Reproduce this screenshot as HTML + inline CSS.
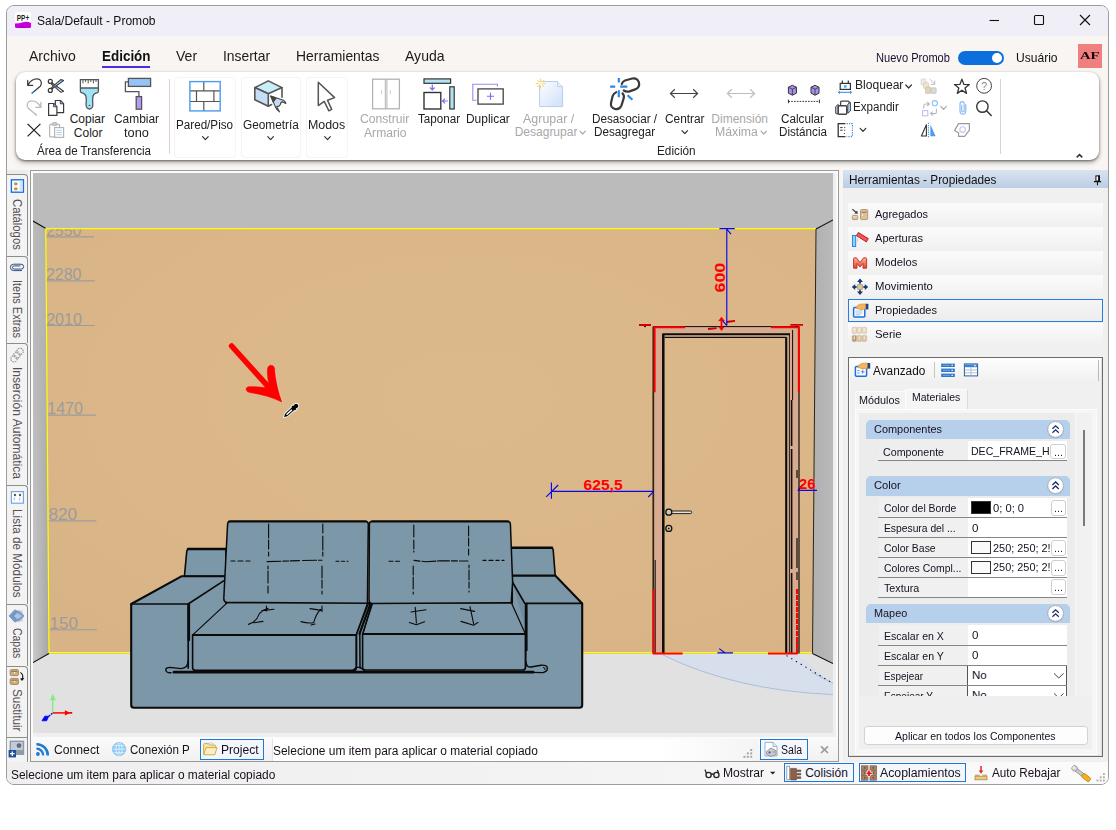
<!DOCTYPE html>
<html><head><meta charset="utf-8"><title>Sala/Default - Promob</title>
<style>
html,body{margin:0;padding:0;background:#fff;}
body{width:1116px;height:830px;position:relative;overflow:hidden;font-family:"Liberation Sans",sans-serif;}
.t{position:absolute;white-space:nowrap;line-height:1;transform-origin:0 0;}
.b{position:absolute;box-sizing:border-box;}
#win{position:absolute;left:6px;top:5px;width:1103px;height:780px;box-sizing:border-box;border:1px solid #9c9c9c;border-radius:8px;background:#f8f5f2;overflow:hidden;}
</style></head>
<body>
<div id="win"></div>
<div class="b" style="left:7px;top:6px;width:1101px;height:30px;background:#f0eef7;border-radius:7px 7px 0 0;"></div>
<svg class="b" style="left:15px;top:12px;" width="17" height="17" viewBox="0 0 17 17"><rect x="0" y="0" width="16" height="16" rx="2" fill="#fff"/><text x="1.8" y="8.6" font-size="9.5" font-weight="bold" font-family="Liberation Sans" fill="#222" textLength="12.4" lengthAdjust="spacingAndGlyphs">PP+</text><path d="M0 11.5 Q4 11.5 7 10.5 Q12 9 16 11 V14.5 Q16 16 14.5 16 H1.5 Q0 16 0 14.5Z" fill="#c800e0"/><path d="M4 16 L8 11.5 L10 16Z" fill="#9a00c0" opacity=".6"/></svg>
<span class="t" style="left:36.5px;top:15px;font-size:12.5px;color:#111;transform:scaleX(0.964);">Sala/Default - Promob</span>
<svg class="b" style="left:985px;top:10px;" width="110" height="20" viewBox="0 0 110 20"><path d="M4.5 10.5H14" stroke="#111" stroke-width="1.1" fill="none"/><rect x="49.5" y="5.5" width="9" height="9" rx="1" stroke="#111" stroke-width="1.1" fill="none"/><path d="M95 5L105 15M105 5L95 15" stroke="#111" stroke-width="1.1" fill="none"/></svg>
<span class="t" style="left:28.8px;top:48px;font-size:15px;color:#1f1a17;transform:scaleX(0.935);">Archivo</span>
<span class="t" style="left:102.0px;top:48px;font-size:15px;color:#111;font-weight:bold;transform:scaleX(0.896);">Edición</span>
<div class="b" style="left:102px;top:66px;width:48px;height:2px;background:#4a2fe0;"></div>
<span class="t" style="left:176.0px;top:48px;font-size:15px;color:#1f1a17;transform:scaleX(0.939);">Ver</span>
<span class="t" style="left:222.7px;top:48px;font-size:15px;color:#1f1a17;transform:scaleX(0.925);">Insertar</span>
<span class="t" style="left:295.7px;top:48px;font-size:15px;color:#1f1a17;transform:scaleX(0.926);">Herramientas</span>
<span class="t" style="left:404.8px;top:48px;font-size:15px;color:#1f1a17;transform:scaleX(0.936);">Ayuda</span>
<span class="t" style="left:875.9px;top:52px;font-size:12.5px;color:#1a0f30;transform:scaleX(0.887);">Nuevo Promob</span>
<div class="b" style="left:957.5px;top:50.5px;width:46px;height:14.5px;background:#0c6fdc;border-radius:8px;"></div>
<div class="b" style="left:991.5px;top:52.5px;width:10.5px;height:10.5px;background:#fff;border-radius:6px;"></div>
<span class="t" style="left:1016.1px;top:51px;font-size:13px;color:#111;transform:scaleX(0.928);">Usuário</span>
<div class="b" style="left:1078px;top:44px;width:24px;height:23.5px;background:#f08080;"></div>
<span class="t" style="left:1080.2px;top:50px;font-size:11px;color:#140808;font-weight:bold;font-family:'Liberation Serif',serif;transform:scaleX(1.336);">AF</span>
<div class="b" style="left:16px;top:72px;width:1082.6px;height:87.6px;background:#fff;border-radius:9px;box-shadow:0 1px 2.5px rgba(0,0,0,.5),0 3px 5px rgba(0,0,0,.22);"></div>
<div class="b" style="left:173.5px;top:76.5px;width:62px;height:81px;border:1px solid #f8f2f2;border-radius:4px;"></div>
<div class="b" style="left:240.5px;top:76.5px;width:60px;height:81px;border:1px solid #f8f2f2;border-radius:4px;"></div>
<div class="b" style="left:305.5px;top:76.5px;width:42px;height:81px;border:1px solid #f8f2f2;border-radius:4px;"></div>
<div class="b" style="left:169px;top:79px;width:1px;height:75px;background:#ddd2cf;"></div>
<div class="b" style="left:1000px;top:79px;width:1px;height:75px;background:#ddd2cf;"></div>
<span class="t" style="left:69.7px;top:113px;font-size:12px;color:#222;">Copiar</span>
<span class="t" style="left:73.8px;top:127px;font-size:12px;color:#222;">Color</span>
<span class="t" style="left:113.5px;top:113px;font-size:12px;color:#222;transform:scaleX(0.994);">Cambiar</span>
<span class="t" style="left:124.2px;top:127px;font-size:12px;color:#222;transform:scaleX(1.065);">tono</span>
<span class="t" style="left:36.5px;top:145px;font-size:12px;color:#222;transform:scaleX(0.966);">Área de Transferencia</span>
<span class="t" style="left:176.1px;top:119px;font-size:12px;color:#222;transform:scaleX(0.972);">Pared/Piso</span>
<span class="t" style="left:242.5px;top:119px;font-size:12px;color:#222;transform:scaleX(0.986);">Geometría</span>
<span class="t" style="left:308.4px;top:119px;font-size:12px;color:#222;transform:scaleX(1.032);">Modos</span>
<span class="t" style="left:359.8px;top:113px;font-size:12px;color:#a8a8a8;transform:scaleX(1.012);">Construir</span>
<span class="t" style="left:363.5px;top:127px;font-size:12px;color:#a8a8a8;transform:scaleX(1.011);">Armario</span>
<span class="t" style="left:418.0px;top:113px;font-size:12px;color:#222;transform:scaleX(0.973);">Taponar</span>
<span class="t" style="left:466.4px;top:113px;font-size:12px;color:#222;transform:scaleX(0.995);">Duplicar</span>
<span class="t" style="left:523.3px;top:113px;font-size:12px;color:#a8a8a8;transform:scaleX(1.039);">Agrupar /</span>
<span class="t" style="left:514.7px;top:126px;font-size:12px;color:#a8a8a8;">Desagrupar</span>
<span class="t" style="left:591.5px;top:113px;font-size:12px;color:#222;transform:scaleX(0.976);">Desasociar /</span>
<span class="t" style="left:594.0px;top:126px;font-size:12px;color:#222;transform:scaleX(0.974);">Desagregar</span>
<span class="t" style="left:664.5px;top:113px;font-size:12px;color:#222;transform:scaleX(0.989);">Centrar</span>
<span class="t" style="left:711.3px;top:113px;font-size:12px;color:#a8a8a8;">Dimensión</span>
<span class="t" style="left:715.2px;top:126px;font-size:12px;color:#a8a8a8;transform:scaleX(1.021);">Máxima</span>
<span class="t" style="left:781.3px;top:113px;font-size:12px;color:#222;transform:scaleX(0.974);">Calcular</span>
<span class="t" style="left:779.2px;top:126px;font-size:12px;color:#222;transform:scaleX(0.972);">Distáncia</span>
<span class="t" style="left:657.0px;top:145px;font-size:12px;color:#222;transform:scaleX(0.980);">Edición</span>
<span class="t" style="left:854.7px;top:79px;font-size:12px;color:#222;transform:scaleX(1.007);">Bloquear</span>
<span class="t" style="left:853.3px;top:101px;font-size:12px;color:#222;transform:scaleX(0.967);">Expandir</span>
<svg class="b" style="left:0px;top:0px;" width="1116" height="170" viewBox="0 0 1116 170"><path d="M202.6 136.6l2.8 3l2.8 -3" stroke="#333" stroke-width="1.2" fill="none" stroke-linecap="round" stroke-linejoin="round"/><path d="M267.8 136.6l2.8 3l2.8 -3" stroke="#333" stroke-width="1.2" fill="none" stroke-linecap="round" stroke-linejoin="round"/><path d="M324.7 136.6l2.8 3l2.8 -3" stroke="#333" stroke-width="1.2" fill="none" stroke-linecap="round" stroke-linejoin="round"/><path d="M580 131.2l2.7 2.8l2.7 -2.8" stroke="#a8a8a8" stroke-width="1.2" fill="none" stroke-linecap="round" stroke-linejoin="round"/><path d="M682 130.6l2.8 3l2.8 -3" stroke="#333" stroke-width="1.2" fill="none" stroke-linecap="round" stroke-linejoin="round"/><path d="M761 131.2l2.7 2.8l2.7 -2.8" stroke="#a8a8a8" stroke-width="1.2" fill="none" stroke-linecap="round" stroke-linejoin="round"/><path d="M905.8 85l2.8 3l2.8 -3" stroke="#333" stroke-width="1.2" fill="none" stroke-linecap="round" stroke-linejoin="round"/><path d="M860.2 128.3l2.8 3l2.8 -3" stroke="#333" stroke-width="1.2" fill="none" stroke-linecap="round" stroke-linejoin="round"/><path d="M940.8 106.3l2.8 3l2.8 -3" stroke="#a8a8a8" stroke-width="1.2" fill="none" stroke-linecap="round" stroke-linejoin="round"/><path d="M1076.7 157.4l2.8-2.8l2.8 2.8" stroke="#333" stroke-width="1.5" fill="none"/><path d="M27.7 80.4V85.3H32.8M27.9 85.1C30 81 33.5 78.7 37.3 78.8C41 79 42.6 83 40.3 86.2L32.2 93" stroke="#3a3a3a" stroke-width="1.25" fill="none" stroke-linecap="round" stroke-linejoin="round"/><path d="M33.4 92L32.2 93" stroke="#3b8eea" stroke-width="1.4" stroke-linecap="round"/><path d="M40.9 102.4V107.3H35.8M40.7 107.1C38.6 103 35.1 100.7 31.3 100.8C27.6 101 26 105 28.3 108.2L36.4 115" stroke="#b9b9b9" stroke-width="1.25" fill="none" stroke-linecap="round" stroke-linejoin="round"/><path d="M35.2 114L36.4 115" stroke="#9cc6f5" stroke-width="1.4" stroke-linecap="round"/><circle cx="50.3" cy="81.4" r="2" fill="#fff" stroke="#3a3a3a" stroke-width="1.2"/><circle cx="50.3" cy="90.4" r="2" fill="#fff" stroke="#3a3a3a" stroke-width="1.2"/><path d="M51.8 82.8L63.6 91.3L61 92.3L51.3 84Z" fill="#fff" stroke="#3a3a3a" stroke-width="1.1" stroke-linejoin="round"/><path d="M51.8 89L63.6 80.5L61 79.5L51.3 87.8Z" fill="#fff" stroke="#3a3a3a" stroke-width="1.1" stroke-linejoin="round"/><path d="M60.2 81L62.4 79.9M55.4 87L57.6 88.4" stroke="#3b8eea" stroke-width="1.3"/><path d="M55.3 100.5H60.5L63.6 103.6V112.7H55.3Z" fill="#fff" stroke="#3a3a3a" stroke-width="1.2" stroke-linejoin="round"/><path d="M60.3 100.8V103.8H63.4" fill="#b08ae8" stroke="#3a3a3a" stroke-width=".9"/><path d="M48.6 103.5H53.8L56.9 106.6V115.4H48.6Z" fill="#fff" stroke="#3a3a3a" stroke-width="1.2" stroke-linejoin="round"/><path d="M53.6 103.8V106.8H56.7" fill="#b08ae8" stroke="#3a3a3a" stroke-width=".9"/><path d="M27.6 123.9L40.4 136.4M40.4 123.9L27.6 136.4" stroke="#222" stroke-width="1.3" fill="none"/><rect x="49.6" y="124.3" width="10" height="12.6" rx="1" fill="#fff" stroke="#b5b5b5" stroke-width="1.2"/><rect x="52.3" y="122.6" width="4.6" height="3" rx=".8" fill="#c9c4dc" stroke="#b5b5b5" stroke-width=".9"/><rect x="54.6" y="127.6" width="9" height="9.8" fill="#fff" stroke="#b5b5b5" stroke-width="1.2"/><path d="M56.4 130.3H61.8M56.4 132.5H61.8M56.4 134.7H61.8" stroke="#a9d0f7" stroke-width="1"/><path d="M80.4 88V79.6H98.4V88" fill="#fff" stroke="#555" stroke-width="1.3"/><path d="M83 80V83.4M85.6 80V82M88.2 80V83.4M90.8 80V82M93.4 80V83.4M96 80V82" stroke="#555" stroke-width="1"/><path d="M80.4 88H98.4V91.2Q98.4 92.6 96.8 92.9Q93.6 93.6 92.9 96.5Q92.4 99.5 92.8 103.5Q93.2 108.8 89.5 109Q85.7 108.8 86.1 103.5Q86.5 99.5 86 96.5Q85.3 93.6 82 92.9Q80.4 92.6 80.4 91.2Z" fill="#9fe3f8" stroke="#555" stroke-width="1.3" stroke-linejoin="round"/><path d="M88.6 105.4H90.4" stroke="#555" stroke-width="1"/><path d="M128.3 81.8H125.4V91.6H138.9V96.6" fill="none" stroke="#555" stroke-width="1.3"/><rect x="128.4" y="78.4" width="22.2" height="8" fill="#94c4f5" stroke="#555" stroke-width="1.3"/><rect x="136.2" y="96.6" width="5.4" height="12.6" fill="#b79af5" stroke="#555" stroke-width="1.3"/><path d="M190 90.8H220M190 101.5H220M203.8 81.5V90.8M196.5 90.8V101.5M213.9 90.8V101.5M203.8 101.5V111" stroke="#555" stroke-width="1.2" fill="none"/><rect x="189.9" y="81.6" width="30.3" height="29.3" fill="none" stroke="#4b9cee" stroke-width="1.4"/><path d="M282 87.5V99.7L268.3 106.2V93.6Z" fill="#fff"/><path d="M268.3 80.9L282 87.6L268.3 93.7L254.8 87.6Z" fill="#c9edfb" stroke="#555" stroke-width="1.6" stroke-linejoin="round"/><path d="M254.8 87.6L268.3 93.7V106.2L254.8 99.7Z" fill="#c6ddf6" stroke="#555" stroke-width="1.6" stroke-linejoin="round"/><path d="M282 87.6V97.2M268.3 106.2L271.6 104.5" fill="none" stroke="#555" stroke-width="1.6" stroke-linecap="round"/><path d="M270.7 96L283.4 100.2Q285.4 101.4 285.9 103.4L282.6 101.9Q280.6 102 280.4 104.4Q279.4 106.6 276.6 106.6L279.6 111.9Q277 110 275.6 107.4Z" fill="#c4daf5" stroke="#444" stroke-width="1.1" stroke-linejoin="round"/><path d="M270.7 96L276.4 98L273.2 102.4Z" fill="#444" stroke="#444" stroke-width=".8" stroke-linejoin="round"/><path d="M318.3 82.2V105.6L324.2 101.4L328.9 110.8L331.7 109.4L327.5 100.3L334.6 97.6Z" fill="#fff" stroke="#555" stroke-width="1.5" stroke-linejoin="round"/><rect x="372.6" y="79.2" width="26.8" height="29.6" fill="#fff" stroke="#b3b3b3" stroke-width="1.3"/><path d="M385.3 79.2V108.8M386.9 79.2V108.8" stroke="#b3b3b3" stroke-width="1"/><path d="M381.6 90.3V94.2M390.4 90.3V94.2" stroke="#d4c8f5" stroke-width="1.2"/><rect x="424" y="78.9" width="26.6" height="4.4" fill="#b4e3f5" stroke="#333" stroke-width="1.2"/><rect x="449.8" y="86.8" width="4.4" height="22.2" fill="#b4e3f5" stroke="#333" stroke-width="1.2"/><rect x="424" y="92.5" width="16.8" height="16.5" fill="#fff" stroke="#333" stroke-width="1.4"/><path d="M432.3 84.6V89.6M430 87.5L432.3 89.8L434.6 87.5" stroke="#8a63ee" stroke-width="1.2" fill="none"/><path d="M447.8 101H442.8M444.9 98.7L442.6 101L444.9 103.3" stroke="#8a63ee" stroke-width="1.2" fill="none"/><path d="M497.4 86.5V84.2H472.8V100.2H476.5" fill="none" stroke="#9f89f0" stroke-width="1.1"/><rect x="478" y="88.9" width="25.2" height="15.2" fill="#fff" stroke="#444" stroke-width="1.3"/><path d="M490.5 92.8V99.8M487 96.3H494" stroke="#8a63ee" stroke-width="1.1"/><defs><linearGradient id="pg" x1="0" y1="0" x2="1" y2="1"><stop offset="0" stop-color="#fdfeff"/><stop offset="1" stop-color="#cfe0f8"/></linearGradient></defs><path d="M539.6 81.5H557.5L562.6 86.6V106.6H539.6Z" fill="url(#pg)" stroke="#b9cdf0" stroke-width="1"/><path d="M557.5 81.5V86.6H562.6" fill="#e8f0fc" stroke="#b9cdf0" stroke-width=".9"/><path d="M540.6 78.6V88.6M535.6 83.6H545.6M537.2 80.2L544 87M544 80.2L537.2 87" stroke="#f3d35a" stroke-width="1"/><circle cx="540.6" cy="83.6" r="2" fill="#fff6c8"/><g fill="none" stroke="#3a3a3a" stroke-width="2.2" stroke-linecap="round" stroke-linejoin="round"><path d="M621.8 84.1Q622.4 81.4 625 80.5L632.2 78.5Q637.2 77.6 638.9 82.3Q640.2 87.6 635.2 89.4L629.5 91.4Q626.4 92.3 623.8 90.5"/><path d="M616.2 92.2Q613.4 93.4 612.5 96.4L611 103Q610.2 107.6 614.8 108.9Q619.6 109.9 621.4 105.6L623.6 98.6Q624.6 95.6 622.5 93.3"/></g><path d="M618.8 78.1V82.6M610.1 86.6H615.2M620.2 86.6H627.3M618.8 90.2V97.3M627.6 95.2L632.4 99.8" stroke="#2b87ee" stroke-width="2.2" fill="none"/><path d="M670.6 93.5H697.4M674.8 89.3L670.4 93.5L674.8 97.7M693.2 89.3L697.6 93.5L693.2 97.7" stroke="#444" stroke-width="1.2" fill="none"/><path d="M727.6 93.5H754.4M731.8 89.3L727.4 93.5L731.8 97.7M750.2 89.3L754.6 93.5L750.2 97.7" stroke="#bdbdbd" stroke-width="1.2" fill="none"/><path d="M792.4 85.3L796.4 87.2V93.2L792.4 95.2L788.4 93.2V87.2Z" fill="#a88ff0" stroke="#333" stroke-width="1" stroke-linejoin="round"/><path d="M788.4 87.2L792.4 89.2L796.4 87.2M792.4 89.2V95.2" stroke="#333" stroke-width=".8" fill="none"/><path d="M815 85.3L819 87.2V93.2L815 95.2L811 93.2V87.2Z" fill="#a88ff0" stroke="#333" stroke-width="1" stroke-linejoin="round"/><path d="M811 87.2L815 89.2L819 87.2M815 89.2V95.2" stroke="#333" stroke-width=".8" fill="none"/><path d="M788.4 101.4H819.4" stroke="#333" stroke-width="1" stroke-dasharray="1.6 1.2"/><path d="M788.4 99.6V103.2M819.4 99.6V103.2" stroke="#333" stroke-width="1"/><rect x="840.2" y="83.4" width="10.2" height="6" fill="#fff" stroke="#333" stroke-width="1.2"/><path d="M842.3 83.4V80.4M848.3 83.4V80.4" stroke="#333" stroke-width="1.2"/><rect x="844" y="85" width="2.6" height="2.8" fill="#39c6f2"/><path d="M838.4 92.3H851.6M840 90.9L838.4 92.3L840 93.7M850 90.9L851.6 92.3L850 93.7" stroke="#2f86ee" stroke-width="1" fill="none"/><rect x="840.6" y="101.2" width="8.6" height="8.6" rx="1" fill="#fff" stroke="#444" stroke-width="1.3"/><path d="M835.7 106.6L838.2 104.4V114.2L835.7 113.4Z" fill="#bcd6f3" stroke="#444" stroke-width="1" stroke-linejoin="round"/><path d="M847.8 104.2L850.4 102.4V111L847.8 113.2Z" fill="#bcd6f3" stroke="#444" stroke-width="1" stroke-linejoin="round"/><rect x="838.3" y="105.8" width="8.4" height="8.4" rx="1" fill="#fff" stroke="#444" stroke-width="1.4"/><path d="M845.4 123.6H838.2V136.6H845.4" fill="#fff" stroke="#333" stroke-width="1.3"/><path d="M840.2 127.6H842.6M840.2 130.2H842.6M844.2 127.6H845.2M844.2 130.2H845.2M844.4 133V134" stroke="#333" stroke-width="1"/><path d="M846.6 123.6H852.4V136.6H846.6" fill="none" stroke="#2f86ee" stroke-width="1.2" stroke-dasharray="1.2 1.2"/><rect x="921" y="79" width="5" height="6" rx="1" fill="#efe9e0" stroke="#d9d3c8" stroke-width=".7"/><rect x="923.5" y="82.5" width="5" height="6" rx="1" fill="#ece3d3" stroke="#d5cbb8" stroke-width=".7"/><rect x="925.5" y="87" width="5.4" height="6.4" rx="1" fill="#e3d3b8" stroke="#cbbd9f" stroke-width=".7"/><rect x="931" y="87.8" width="5.2" height="5.6" rx="1" fill="#d9d9d9" stroke="#c2c2c2" stroke-width=".7"/><path d="M929.6 79L934.8 84.2M934.8 80.6V84.4H931" stroke="#bdbdbd" stroke-width="1" fill="none"/><circle cx="934.8" cy="103.2" r="2.6" fill="none" stroke="#8cc0f3" stroke-width="1.1"/><rect x="922.6" y="110.6" width="5.2" height="5.2" fill="none" stroke="#c9bbf3" stroke-width="1.1"/><path d="M923.8 108.6V105.6Q923.8 104 925.6 104H929M927.2 102L929.4 104L927.2 106" stroke="#b9b9b9" stroke-width="1.1" fill="none"/><path d="M936.4 108.8V112.2Q936.4 113.6 934.8 113.6H931M932.8 111.6L930.6 113.6L932.8 115.6" stroke="#b9b9b9" stroke-width="1.1" fill="none"/><path d="M921.4 136L926.4 124.8V136Z" fill="#fff" stroke="#333" stroke-width="1.1" stroke-linejoin="round"/><path d="M930.4 124.6V136.2H935.6Z" fill="#4b9cee"/><path d="M928.4 122.8V137.8" stroke="#2f86ee" stroke-width="1" stroke-dasharray="1.2 1"/><polygon points="961.9,79.1 963.8,84.3 969.4,84.6 965.0,88.0 966.5,93.4 961.9,90.3 957.3,93.4 958.8,88.0 954.4,84.6 960.0,84.3" fill="#fff" stroke="#333" stroke-width="1.3" stroke-linejoin="round"/><circle cx="984.1" cy="85.8" r="7.4" fill="#fff" stroke="#444" stroke-width="1"/><text x="984.1" y="89.6" font-size="10.5" text-anchor="middle" fill="#888" font-family="Liberation Sans">?</text><path d="M965.8 104.6V110.8Q965.8 114.2 962.9 114.2Q960 114.2 960 110.8V104Q960 101.6 962.2 101.6Q964.2 101.6 964.2 104V110.4Q964.2 111.8 962.9 111.8Q961.7 111.8 961.7 110.4V105" fill="none" stroke="#8bbcf2" stroke-width="1.2" stroke-linecap="round"/><circle cx="982.4" cy="106.6" r="5.7" fill="none" stroke="#333" stroke-width="1.4"/><path d="M986.5 110.8L991.2 115.5" stroke="#333" stroke-width="1.5" stroke-linecap="round"/><path d="M958.6 123.6H969.4V130.2L964.6 136.4H958.6V132.8L954.6 130.4Z" fill="#fff" stroke="#9a9a9a" stroke-width="1.2" stroke-linejoin="round"/><circle cx="962.6" cy="129.6" r="2.8" fill="none" stroke="#cdbff5" stroke-width="1.1"/></svg>
<div class="b" style="left:7px;top:170px;width:24px;height:593px;background:#ececec;"></div>
<div class="b" style="left:27.5px;top:170px;width:3px;height:593px;background:#f4f4f4;"></div>
<div class="b" style="left:7px;top:174px;width:21px;height:82px;background:#f3f3f3;border-top:1px solid #8c8c8c;border-right:1px solid #8c8c8c;border-radius:0 4px 0 0;"></div>
<span class="t" style="left:23.4px;top:198.6px;font-size:12px;color:#565054;transform:rotate(90deg) scaleX(0.940);">Catálogos</span>
<div class="b" style="left:7px;top:256px;width:21px;height:87px;background:#f3f3f3;border-top:1px solid #8c8c8c;border-right:1px solid #8c8c8c;border-radius:0 4px 0 0;"></div>
<span class="t" style="left:23.4px;top:280.3px;font-size:12px;color:#565054;transform:rotate(90deg) scaleX(0.914);">Itens Extras</span>
<div class="b" style="left:7px;top:343px;width:21px;height:142px;background:#f3f3f3;border-top:1px solid #8c8c8c;border-right:1px solid #8c8c8c;border-radius:0 4px 0 0;"></div>
<span class="t" style="left:23.4px;top:366.5px;font-size:12px;color:#565054;transform:rotate(90deg) scaleX(1.006);">Inserción Automática</span>
<div class="b" style="left:7px;top:485px;width:21px;height:119px;background:#f3f3f3;border-top:1px solid #8c8c8c;border-right:1px solid #8c8c8c;border-radius:0 4px 0 0;"></div>
<span class="t" style="left:23.4px;top:509.4px;font-size:12px;color:#565054;transform:rotate(90deg) scaleX(0.977);">Lista de Módulos</span>
<div class="b" style="left:7px;top:604px;width:21px;height:62px;background:#f3f3f3;border-top:1px solid #8c8c8c;border-right:1px solid #8c8c8c;border-radius:0 4px 0 0;"></div>
<span class="t" style="left:23.4px;top:628.0px;font-size:12px;color:#565054;transform:rotate(90deg) scaleX(0.871);">Capas</span>
<div class="b" style="left:7px;top:666px;width:21px;height:71px;background:#f3f3f3;border-top:1px solid #8c8c8c;border-right:1px solid #8c8c8c;border-radius:0 4px 0 0;"></div>
<span class="t" style="left:23.4px;top:689.0px;font-size:12px;color:#565054;transform:rotate(90deg) scaleX(0.980);">Sustituir</span>
<div class="b" style="left:7px;top:737px;width:21px;height:26px;border-top:1px solid #8c8c8c;border-right:1px solid #8c8c8c;background:#f3f3f3;"></div>
<svg class="b" style="left:0px;top:0px;" width="40" height="770" viewBox="0 0 40 770"><rect x="11.4" y="179.8" width="12" height="12.4" fill="#fff" stroke="#1d6fe0" stroke-width="1.4"/><rect x="19.6" y="180.6" width="3" height="10.8" fill="#cfe3fb"/><ellipse cx="15.8" cy="183.8" rx="2" ry="1.6" fill="#b59a5a"/><ellipse cx="15.8" cy="188.8" rx="2" ry="1.6" fill="#b59a5a"/><path d="M22 270.6H13.6Q10.4 270.6 10.4 267.4Q10.4 264.2 13.6 264.2H21Q23.7 264.2 23.7 266.7Q23.7 269.1 21 269.1H14.2Q12.5 269.1 12.5 267.5Q12.5 265.9 14.2 265.9H20.4" fill="none" stroke="#33507e" stroke-width="1"/><g fill="none" stroke="#9a9a9a" stroke-width="1.2"><circle cx="20" cy="351.4" r="3.2" stroke-dasharray="1.6 .9"/><circle cx="17" cy="355" r="3.2" stroke-dasharray="1.6 .9"/><circle cx="14" cy="358.8" r="3.2" stroke-dasharray="1.6 .9"/></g><rect x="11.4" y="491.6" width="12" height="11.6" fill="#fff" stroke="#6fa8f0" stroke-width="1.2"/><circle cx="15" cy="495" r="1.2" fill="#6b5a3a"/><circle cx="20" cy="495" r="1.2" fill="#6b5a3a"/><path d="M14.4 497.5V500.5M19.6 497.5V500.5" stroke="#b9c9e6" stroke-width="1.4"/><path d="M16.4 615.9L22.199999999999996 609.8L23.8 615.9L22.199999999999996 622.2Z" fill="#9fb9dc" opacity="0.55"/><path d="M14 615.9L19.799999999999997 609.8L23.8 615.9L19.799999999999997 622.2Z" fill="#8dabd3" opacity="0.67"/><path d="M11.6 615.9L17.4 609.8L23.8 615.9L17.4 622.2Z" fill="#7d9ecb" opacity="0.79"/><path d="M9 615.9L14.799999999999999 609.8L23.8 615.9L14.799999999999999 622.2Z" fill="#6f92c3" opacity="0.91"/><path d="M9 615.9L14.8 609.8L23.8 615.9L14.8 622.2Z" fill="none" stroke="#6387bd" stroke-width=".6"/><path d="M14 615.9L17.4 612.6L22.6 615.9L17.4 619.4Z" fill="#c4d6ee" opacity=".7"/><rect x="10.2" y="669.6" width="8.2" height="6" rx="1.2" fill="#cdae7e" stroke="#a3835a" stroke-width=".9"/><path d="M11.4 671.4H17.2" stroke="#8d6f47" stroke-width=".9"/><rect x="14" y="672.2" width="1.2" height="1.2" fill="#fff"/><rect x="10.2" y="678.4" width="8.2" height="6" rx="1.2" fill="#cdae7e" stroke="#a3835a" stroke-width=".9"/><path d="M11.4 680.1999999999999H17.2" stroke="#8d6f47" stroke-width=".9"/><rect x="14" y="681.0" width="1.2" height="1.2" fill="#fff"/><path d="M20.4 672.4Q23.8 674.6 22.4 679.4" fill="none" stroke="#111" stroke-width="1.1"/><path d="M20 678.6L22 681L24.4 678Z" fill="#111"/><rect x="9.6" y="740.6" width="14.6" height="14.4" fill="#8f9aa8"/><rect x="11" y="742" width="11.8" height="8" fill="#c3cbd6"/><circle cx="19" cy="745.6" r="2.4" fill="#5f6b7b"/><rect x="8.6" y="750" width="7.4" height="7.4" fill="#1c4f9c"/><path d="M12.3 751.4V756M10 753.7H14.6" stroke="#fff" stroke-width="1.3"/></svg>
<div class="b" style="left:30px;top:170px;width:809px;height:592px;background:#f1f1f1;border:1px solid #9a9a9a;border-bottom:none;"></div>
<div class="b" style="left:31px;top:171px;width:807px;height:568px;border:2px solid #fbfbfb;background:#efefef;"></div>
<svg class="b" style="left:33px;top:173px;" width="800" height="560" viewBox="33 173 800 560"><defs><radialGradient id="wallg" cx="0.55" cy="0.4" r="0.75"><stop offset="0" stop-color="#dcb98b"/><stop offset="0.6" stop-color="#dab688"/><stop offset="1" stop-color="#d8b386"/></radialGradient><linearGradient id="lw" x1="0" y1="0" x2="1" y2="0"><stop offset="0" stop-color="#cacaca"/><stop offset="1" stop-color="#a4a4a4"/></linearGradient><linearGradient id="rw" x1="0" y1="0" x2="1" y2="0"><stop offset="0" stop-color="#b0b0b0"/><stop offset="1" stop-color="#b9b9b9"/></linearGradient><linearGradient id="ceil" x1="0" y1="0" x2="0" y2="1"><stop offset="0" stop-color="#bbbbbb"/><stop offset="1" stop-color="#b9b9b9"/></linearGradient><clipPath id="wallclip"><polygon points="45.5,229 816,229 812.5,653.5 49,653.5"/></clipPath><linearGradient id="lw0" x1="0" y1="0" x2="1" y2="0"><stop offset="0" stop-color="#bbbbbb"/><stop offset="1" stop-color="#b0b0b0"/></linearGradient><linearGradient id="vm" x1="0" y1="0" x2="0" y2="1"><stop offset="0.25" stop-color="#000"/><stop offset="1" stop-color="#fff"/></linearGradient><mask id="lwm"><rect x="33" y="221" width="20" height="445" fill="url(#vm)"/></mask></defs><rect x="33" y="173" width="800" height="560" fill="url(#ceil)"/><polygon points="33,662.5 49,653.5 812.5,653.5 833,663.5 833,733 33,733" fill="#e1e1e1"/><polygon points="33,221 45.5,228.5 49,653.5 33,662.5" fill="url(#lw0)"/><polygon points="33,221 45.5,228.5 49,653.5 33,662.5" fill="url(#lw)" mask="url(#lwm)"/><polygon points="816,229 833,220 833,663.5 812.5,653.5" fill="url(#rw)"/><polygon points="45.5,229 816,229 812.5,653.5 49,653.5" fill="url(#wallg)"/><g clip-path="url(#wallclip)" font-family="Liberation Sans" font-size="16" fill="#9c9c9c"><text x="45.9" y="236" textLength="35.6" lengthAdjust="spacingAndGlyphs">2550</text><path d="M45.1 236.9H94" stroke="#9c9c9c" stroke-width="1.1"/><text x="45.9" y="280" textLength="35.6" lengthAdjust="spacingAndGlyphs">2280</text><path d="M45.1 280.9H94.7" stroke="#9c9c9c" stroke-width="1.1"/><text x="46.2" y="324.6" textLength="35.6" lengthAdjust="spacingAndGlyphs">2010</text><path d="M45.400000000000006 325.5H95" stroke="#9c9c9c" stroke-width="1.1"/><text x="47.2" y="414.2" textLength="35.8" lengthAdjust="spacingAndGlyphs">1470</text><path d="M46.400000000000006 415.09999999999997H95.8" stroke="#9c9c9c" stroke-width="1.1"/><text x="48.4" y="520" textLength="28.6" lengthAdjust="spacingAndGlyphs">820</text><path d="M47.6 520.9H96.4" stroke="#9c9c9c" stroke-width="1.1"/><text x="49.6" y="628.8" textLength="28.4" lengthAdjust="spacingAndGlyphs">150</text><path d="M48.800000000000004 629.6999999999999H96.8" stroke="#9c9c9c" stroke-width="1.1"/></g><path d="M45.5 228.6H816" stroke="#ffff00" stroke-width="1.3"/><path d="M45.8 228.6L49 653.2" stroke="#ffff00" stroke-width="1.2"/><path d="M49 652.7H812.5" stroke="#ffff00" stroke-width="1.3"/><path d="M33 221L45.5 228.3M816 229L833 220M49 653.6L33 662.6M812.5 653.6L833 663.5" stroke="#111" stroke-width="1.1"/><path d="M816 229L812.5 653.5" stroke="#2a2414" stroke-width="1"/><path d="M663 654.2Q735 690 833 694.4V683.3L797.5 654.2Z" fill="#d8dfec"/><path d="M663 655Q735 690.4 833 694.6" fill="none" stroke="#a9bede" stroke-width="1"/><path d="M812 672.4L833 683.4" stroke="#a9bede" stroke-width="1"/><path d="M786.5 655.6L833.4 683.6" stroke="#111" stroke-width="1.1" stroke-dasharray="1.3 4.2"/><rect x="653.4" y="326.6" width="9" height="327" fill="#d8ab90"/><rect x="653.4" y="326.6" width="145.6" height="7.2" fill="#d8ab90"/><rect x="786.8" y="326.6" width="12.2" height="327" fill="#d8ab90"/><rect x="662.4" y="333.8" width="124.4" height="3.6" fill="#dcb591"/><g stroke="#0c0c08" fill="none"><path d="M653.3 326.8V653.5" stroke-width="1.7" stroke="#2a2410"/><path d="M799 326.8V653.5" stroke-width="1.2"/><path d="M653.2 326.6H799.2" stroke-width="1"/><path d="M662.4 334.2H790" stroke-width="1.9"/><path d="M664.6 337.4H786.6" stroke-width="1.2"/><path d="M663.3 334V653.5" stroke-width="2.5"/><path d="M786.2 337.4V653.5" stroke-width="2.1"/><path d="M789.4 333.8V653.5" stroke-width=".9"/><path d="M792.6 330V400" stroke-width="1"/><path d="M791.6 400V653.5" stroke-width="1.6" stroke-dasharray="46 3 120 4 80 2"/><path d="M655.2 560V653.5" stroke-width="1"/><path d="M797 470V653.5" stroke-width="1.2" stroke-dasharray="8 60 30 4"/></g><rect x="668" y="511" width="23.6" height="2.6" rx="1.2" fill="#e6e2dc" stroke="#111" stroke-width=".9"/><circle cx="668.8" cy="512.2" r="3" fill="#cfc7bd" stroke="#111" stroke-width="1.3"/><circle cx="668.8" cy="528.4" r="3" fill="#d9c3a4" stroke="#111" stroke-width="1.3"/><circle cx="668.8" cy="528.4" r=".9" fill="#111"/><g stroke="#ff0000" stroke-width="2" fill="none"><path d="M654.6 327.2H685M654.6 326.4V392.2M771 327.2H799M798.8 326.4V392.2"/><path d="M653.6 589V654M653 653.6H682.6M768 653.6H797.6"/><path d="M797 589V654" stroke-dasharray="5 1"/></g><path d="M639 325H651M790.4 324.8H803" stroke="#d40000" stroke-width="1.8"/><path d="M644 326.6H646M795 326.4H798" stroke="#400" stroke-width="1"/><path d="M721.5 329.4V319.6" stroke="#ff0000" stroke-width="1.8"/><path d="M718.2 321L721.5 316.8L724.8 321Z" fill="#ff0000"/><path d="M718.6 327L721.5 331L724.4 327Z" fill="#ff0000"/><path d="M708 329L716.6 328.2M726.4 322L735 320.8" stroke="#c40000" stroke-width="1.8"/><g stroke="#0808f0" stroke-width="1.15" fill="none"><path d="M726.8 229V325.6M719.4 228.6H734.8M726.8 229.2L731 234.2M722.6 320.6L726.8 325.6"/><path d="M551.3 491.4H653.6M551.4 482.6V498.8M546.2 496.8L558.2 485M648.2 497L653.5 491.6"/><path d="M797.6 490.4H817M803 484.6L798 490.2"/><path d="M717.4 652.8H733M719.2 648.6L724.8 652.8"/></g><g font-family="Liberation Sans" font-weight="bold" fill="#ff0000" font-size="14.5"><text x="583.6" y="489.8" textLength="39" lengthAdjust="spacingAndGlyphs">625,5</text><text x="799" y="489.4" textLength="16.4" lengthAdjust="spacingAndGlyphs">26</text><text transform="translate(725.2 292.4) rotate(-90)" font-size="15.5" textLength="29.6" lengthAdjust="spacingAndGlyphs">600</text></g><g stroke="#0a0a0a" stroke-linejoin="round" stroke-linecap="round"><path d="M184.4 576.4L186.8 551Q187 549.2 189 549.2H226V576.4Z" fill="#7c98a8" stroke-width="1.6"/><path d="M511 576V548H551Q553 548 553.2 550L555.2 575.6Z" fill="#7c98a8" stroke-width="1.6"/><path d="M188 549H226M512 547.8H552" stroke-width="2.4" fill="none"/><path d="M131.2 604L181.8 576.2H226V603H512V575.6H555.2L582.2 603.4V705Q582.2 707.8 579.4 707.8H134Q131.2 707.8 131.2 705Z" fill="#7c98a8" stroke-width="2.1"/><path d="M511.8 581L524.8 603.4V626Z" fill="#6f8b9c" stroke="none"/><path d="M131.2 604H188.2L224 580.6M188.2 604V668" fill="none" stroke-width="1.7"/><path d="M188.8 604V640" fill="none" stroke-width="2.6"/><path d="M582.2 603.4H524.8L511.8 581M525.6 603.4V667" fill="none" stroke-width="1.7"/><path d="M526.4 604V650" fill="none" stroke-width="2.4"/><path d="M227.4 602.6H367.6L356.2 634.6H193Z" fill="#7c98a8" stroke-width="1.2"/><path d="M372 602.8H511.4L525.2 633.6H363Z" fill="#7c98a8" stroke-width="1.2"/><path d="M192.6 634.8H356.2V668Q356.2 670.4 353.6 670.4H195.4Q192.6 670.4 192.6 667.6Z" fill="#7c98a8" stroke-width="1.6"/><path d="M362.6 633.8H525.4V667.4Q525.4 670 522.6 670H365.4Q362.6 670 362.6 667.4Z" fill="#7c98a8" stroke-width="1.6"/><path d="M193 635H356M363 634H525" fill="none" stroke-width="2.2"/><path d="M368.6 603L356.6 634V668M372.2 604L362.6 634M359.8 634L360 668" fill="none" stroke-width="1.5"/><path d="M370.4 604L359.4 634" fill="none" stroke-width="2.2"/><path d="M174 672.2H533" fill="none" stroke-width="2.8"/><path d="M188.4 660Q188 668.4 181 668.6L170 667.4Q165.6 667.6 165.8 670Q166.2 673 171 672.8" fill="none" stroke-width="1.4"/><path d="M526 662Q526.4 667.4 531 667L541 665.2Q546.8 664.8 547.4 668Q547.4 671.6 543 672.6L531 672.4" fill="none" stroke-width="1.4"/><path d="M543.4 667.4Q545.6 667.6 545 669.6" fill="none" stroke-width="1"/><path d="M352 671L356.6 667.4L360 667.4L365 671" fill="none" stroke-width="1.4"/><path d="M227.6 524Q227.8 521.2 230.6 521.2H365.4Q368.2 521.2 368.3 524L367.4 603.2L227 602.4Q223.6 602 223.8 598.4Z" fill="#7c98a8" stroke-width="1.5"/><path d="M369.4 524Q369.6 521.2 372.4 521.2H507.4Q510 521.2 510.4 524L512.6 582L511.2 602.8L371.6 603.4Q369 603 369 600Z" fill="#7c98a8" stroke-width="1.5"/><path d="M229 521.4H366M372 521.4H508" fill="none" stroke-width="2"/><g fill="none" stroke-width="1.1"><path d="M268.6 524V556" stroke-dasharray="14 2 9 3"/><path d="M268 566V593" stroke-dasharray="3 2 12 3 8 2"/><path d="M322.8 524V556" stroke-dasharray="9 3 14 2"/><path d="M322 566V594" stroke-dasharray="12 2 8 3"/><path d="M231 561H251" stroke-dasharray="4 3 5 3"/><path d="M267 561.6L300 560.6L322 560.2" stroke-dasharray="14 2 6 1.5 9 3"/><path d="M336 561.2H348" stroke-dasharray="3 2.5"/><path d="M413.8 525V552" stroke-dasharray="12 3 9 2"/><path d="M413.2 566V594" stroke-dasharray="9 2 12 3"/><path d="M468.6 526V555" stroke-dasharray="10 2 8 3 6 2"/><path d="M469 565V592" stroke-dasharray="3 2 10 2 6 3"/><path d="M389 561.2H400" stroke-dasharray="4 2.5"/><path d="M414 560.4L426 561.8L440 560.8L468 561" stroke-dasharray="6 2 14 1.5 12 2"/><path d="M483 560.4H504" stroke-dasharray="3 3 4 3"/><path d="M248.4 624.4Q256 622.6 259.4 613.6Q263 609.6 268 608.4M262 610.6L274 609.2M254 622.8L263 621.4M266.4 606V611"/><path d="M301 621.6Q309 624 313.8 622.4Q316 614 320.6 609.4M310 608.6L321.6 610.4M322 606V611.6M311 625L315 624"/><path d="M415.2 607.4L416.4 623M409.4 622.6L416.4 624.8L424.6 621.8M411 612L426 609.8"/><path d="M470 606.6L473.6 623.6M461 621.4L473.6 625.2L478 622.4M460.6 608.6L474.6 611.4"/></g></g><path d="M231.6 346L270 388.6" stroke="#ff0000" stroke-width="5.6" stroke-linecap="round" fill="none"/><path d="M282 402C278.2 392 275.6 380 274.6 368.6Q273.6 365 270.6 365.3Q267.4 366 267.4 370C267.4 376 268 381 269.6 386L264 387.6C258 386.8 252 386.4 248.4 386.8Q245.8 387.4 246.2 389.8Q247 392.2 250 392.6C260 393.8 272 397 282 402Z" fill="#ff0000" stroke="#ff0000" stroke-width=".6" stroke-linejoin="round"/><path d="M275.2 370C276.4 382 279 393 282.6 402.4" stroke="#fff" stroke-width=".5" fill="none" opacity=".7"/><g transform="translate(284 417) rotate(-42.5)"><path d="M0 0L3 -1.7H12.4V-2.6H14.2V-1.8Q18.6 -3 18.6 0Q18.6 3 14.2 1.8V2.6H12.4V1.7H3Z" fill="#000" stroke="#fff" stroke-width="1.7" stroke-linejoin="round"/><path d="M0 0L3 -1.7H12.4V-2.6H14.2V-1.8Q18.6 -3 18.6 0Q18.6 3 14.2 1.8V2.6H12.4V1.7H3Z" fill="#000"/><path d="M3.4 0H10.6" stroke="#fff" stroke-width="1.5"/></g><path d="M52.7 712.6V699.6" stroke="#86ea86" stroke-width="1.4"/><path d="M50 700.2L52.6 693.8L55.8 700.2Z" fill="#86ea86"/><path d="M52.8 712.9H65.4" stroke="#ff0000" stroke-width="1.5"/><path d="M64.9 715.6V710.2L68.6 711.9H72.2V713.8H68.6Z" fill="#ff0000"/><path d="M52.4 713.2L48.6 716.4" stroke="#0000ff" stroke-width="1.4" stroke-dasharray="1.8 1"/><path d="M42 720.8L44.8 716.2H48.8L46.6 720.8Z" fill="#0000ff" stroke="#0000ff" stroke-width=".8" stroke-linejoin="round"/></svg>
<div class="b" style="left:843px;top:170px;width:265px;height:592px;background:#f0f0f0;"></div>
<div class="b" style="left:843px;top:170px;width:265px;height:18px;background:linear-gradient(#d8e3f1,#bccee4);"></div>
<span class="t" style="left:848.9px;top:174px;font-size:12px;color:#111;transform:scaleX(0.983);">Herramientas - Propiedades</span>
<div class="b" style="left:848px;top:203px;width:255px;height:23.6px;background:linear-gradient(#fbfbfb,#efefef);"></div>
<span class="t" style="left:874.7px;top:209px;font-size:11.5px;color:#17101f;transform:scaleX(0.953);">Agregados</span>
<div class="b" style="left:848px;top:227px;width:255px;height:23.6px;background:linear-gradient(#fbfbfb,#efefef);"></div>
<span class="t" style="left:874.7px;top:233px;font-size:11.5px;color:#17101f;transform:scaleX(0.963);">Aperturas</span>
<div class="b" style="left:848px;top:251px;width:255px;height:23.6px;background:linear-gradient(#fbfbfb,#efefef);"></div>
<span class="t" style="left:874.7px;top:257px;font-size:11.5px;color:#17101f;transform:scaleX(0.972);">Modelos</span>
<div class="b" style="left:848px;top:275px;width:255px;height:23.6px;background:linear-gradient(#fbfbfb,#efefef);"></div>
<span class="t" style="left:874.7px;top:281px;font-size:11.5px;color:#17101f;transform:scaleX(0.984);">Movimiento</span>
<div class="b" style="left:848px;top:299px;width:255px;height:23.4px;background:linear-gradient(#f6f6f6,#ececec);border:1px solid #2a7de0;"></div>
<span class="t" style="left:874.7px;top:305px;font-size:11.5px;color:#17101f;transform:scaleX(0.959);">Propiedades</span>
<div class="b" style="left:848px;top:323px;width:255px;height:23.6px;background:linear-gradient(#fbfbfb,#efefef);"></div>
<span class="t" style="left:874.7px;top:329px;font-size:11.5px;color:#17101f;transform:scaleX(0.992);">Serie</span>
<div class="b" style="left:848px;top:357px;width:255px;height:400px;border:1px solid #6c6c6c;background:#f0f0f0;"></div>
<div class="b" style="left:849px;top:358px;width:253px;height:398px;border:1px solid #fcfcfc;border-right-color:#e0e0e0;border-bottom-color:#e0e0e0;"></div>
<div class="b" style="left:850px;top:359px;width:251px;height:23px;background:linear-gradient(#fdfdfd,#f0f0f0);"></div>
<div class="b" style="left:1097.6px;top:360px;width:1.6px;height:21px;background:#b9b9b9;"></div>
<span class="t" style="left:872.7px;top:365px;font-size:12px;color:#111;transform:scaleX(0.984);">Avanzado</span>
<div class="b" style="left:934px;top:362px;width:1px;height:16px;background:#c4c4c4;"></div>
<div class="b" style="left:855px;top:390.5px;width:50.6px;height:19px;border:1px solid #fafafa;border-bottom:none;border-right:1px solid #e2e2e2;background:#f3f3f3;"></div>
<div class="b" style="left:905px;top:388.6px;width:63px;height:21px;border:1px solid #fcfcfc;border-bottom:none;border-right:1px solid #dcdcdc;background:#f5f5f5;"></div>
<span class="t" style="left:859.1px;top:395px;font-size:11.5px;color:#17101f;transform:scaleX(0.939);">Módulos</span>
<span class="t" style="left:911.5px;top:392px;font-size:11.5px;color:#17101f;transform:scaleX(0.911);">Materiales</span>
<div class="b" style="left:855px;top:408.6px;width:242px;height:346px;background:#f6f6f6;border:1px solid #fcfcfc;"></div>
<div class="b" style="left:859.4px;top:413px;width:233px;height:336px;background:#efefef;"></div>
<div class="b" style="left:859.4px;top:413px;width:216px;height:283px;background:#ececec;"></div>
<div class="b" style="left:1075.4px;top:413px;width:1px;height:283px;background:#f8f8f8;"></div>
<div class="b" style="left:1076.4px;top:413px;width:15.6px;height:283px;background:#f1f1f1;"></div>
<div class="b" style="left:1083.2px;top:430px;width:2px;height:96px;background:#7a7a7a;"></div>
<div class="b" style="left:865.8px;top:420px;width:203.8px;height:19.4px;background:#b6cfeb;border-radius:5px 5px 0 0;"></div>
<div class="b" style="left:865.8px;top:476.4px;width:203.8px;height:19.6px;background:#b6cfeb;border-radius:5px 5px 0 0;"></div>
<div class="b" style="left:865.8px;top:604px;width:203.8px;height:19.2px;background:#b6cfeb;border-radius:5px 5px 0 0;"></div>
<span class="t" style="left:873.5px;top:424px;font-size:11.5px;color:#17101f;transform:scaleX(0.950);">Componentes</span>
<span class="t" style="left:874.1px;top:480px;font-size:11.5px;color:#17101f;transform:scaleX(0.976);">Color</span>
<span class="t" style="left:874.1px;top:608px;font-size:11.5px;color:#17101f;transform:scaleX(0.945);">Mapeo</span>
<div class="b" style="left:878.6px;top:441px;width:89.4px;height:19.6px;background:#eeeeee;"></div>
<div class="b" style="left:968px;top:441px;width:98.8px;height:19.6px;background:#fff;"></div>
<span class="t" style="left:882.9px;top:447px;font-size:11.5px;color:#17101f;transform:scaleX(0.927);">Componente</span>
<span class="t" style="left:970.9px;top:446px;font-size:11.5px;color:#17101f;transform:scaleX(0.918);">DEC_FRAME_H</span>
<div class="b" style="left:1050.4px;top:443.6px;width:15.4px;height:15.6px;background:#fff;border:1px solid #cfcfcf;border-radius:3px;"></div>
<span class="t" style="left:1053.5px;top:447px;font-size:11.5px;color:#222;transform:scaleX(0.943);">...</span>
<div class="b" style="left:878.6px;top:497.8px;width:89.4px;height:19.8px;background:#f0f0f0;"></div>
<div class="b" style="left:968px;top:497.8px;width:98.8px;height:19.8px;background:#fff;"></div>
<span class="t" style="left:883.7px;top:503px;font-size:11.5px;color:#17101f;transform:scaleX(0.906);">Color del Borde</span>
<div class="b" style="left:971.2px;top:501.0px;width:19.8px;height:13.4px;background:#000;border:1px solid #333;"></div>
<span class="t" style="left:992.5px;top:503px;font-size:11.5px;color:#17101f;transform:scaleX(0.971);">0; 0; 0</span>
<div class="b" style="left:1050.6px;top:499.8px;width:15.6px;height:16px;background:#fff;border:1px solid #cfcfcf;border-radius:3px;"></div>
<span class="t" style="left:1053.7px;top:503px;font-size:11.5px;color:#222;transform:scaleX(0.943);">...</span>
<div class="b" style="left:878.6px;top:517.7px;width:89.4px;height:19.8px;background:#f0f0f0;"></div>
<div class="b" style="left:968px;top:517.7px;width:98.8px;height:19.8px;background:#fff;"></div>
<span class="t" style="left:883.7px;top:523px;font-size:11.5px;color:#17101f;transform:scaleX(0.896);">Espesura del ...</span>
<span class="t" style="left:971.5px;top:523px;font-size:11.5px;color:#17101f;transform:scaleX(1.006);">0</span>
<div class="b" style="left:878.6px;top:537.6px;width:89.4px;height:19.8px;background:#f0f0f0;"></div>
<div class="b" style="left:968px;top:537.6px;width:98.8px;height:19.8px;background:#fff;"></div>
<span class="t" style="left:883.7px;top:543px;font-size:11.5px;color:#17101f;transform:scaleX(0.908);">Color Base</span>
<div class="b" style="left:971.2px;top:540.8000000000001px;width:19.8px;height:13.4px;background:#fafafa;border:1px solid #333;"></div>
<span class="t" style="left:992.5px;top:543px;font-size:11.5px;color:#17101f;transform:scaleX(0.949);">250; 250; 2!</span>
<div class="b" style="left:1050.6px;top:539.6px;width:15.6px;height:16px;background:#fff;border:1px solid #cfcfcf;border-radius:3px;"></div>
<span class="t" style="left:1053.7px;top:543px;font-size:11.5px;color:#222;transform:scaleX(0.943);">...</span>
<div class="b" style="left:878.6px;top:557.5px;width:89.4px;height:19.8px;background:#f0f0f0;"></div>
<div class="b" style="left:968px;top:557.5px;width:98.8px;height:19.8px;background:#fff;"></div>
<span class="t" style="left:883.7px;top:563px;font-size:11.5px;color:#17101f;transform:scaleX(0.904);">Colores Compl...</span>
<div class="b" style="left:971.2px;top:560.7px;width:19.8px;height:13.4px;background:#fafafa;border:1px solid #333;"></div>
<span class="t" style="left:992.5px;top:562px;font-size:11.5px;color:#17101f;transform:scaleX(0.949);">250; 250; 2!</span>
<div class="b" style="left:1050.6px;top:559.5px;width:15.6px;height:16px;background:#fff;border:1px solid #cfcfcf;border-radius:3px;"></div>
<span class="t" style="left:1053.7px;top:562px;font-size:11.5px;color:#222;transform:scaleX(0.943);">...</span>
<div class="b" style="left:878.6px;top:577.4px;width:89.4px;height:19.8px;background:#f0f0f0;"></div>
<div class="b" style="left:968px;top:577.4px;width:98.8px;height:19.8px;background:#fff;"></div>
<span class="t" style="left:883.7px;top:583px;font-size:11.5px;color:#17101f;transform:scaleX(0.934);">Textura</span>
<div class="b" style="left:1050.6px;top:579.4px;width:15.6px;height:16px;background:#fff;border:1px solid #cfcfcf;border-radius:3px;"></div>
<span class="t" style="left:1053.7px;top:582px;font-size:11.5px;color:#222;transform:scaleX(0.943);">...</span>
<div class="b" style="left:878.6px;top:625.4px;width:89.4px;height:19.8px;background:#f0f0f0;"></div>
<div class="b" style="left:968px;top:625.4px;width:98.8px;height:19.8px;background:#fff;"></div>
<span class="t" style="left:883.7px;top:631px;font-size:11.5px;color:#17101f;transform:scaleX(0.918);">Escalar en X</span>
<span class="t" style="left:971.5px;top:630px;font-size:11.5px;color:#17101f;transform:scaleX(1.006);">0</span>
<div class="b" style="left:878.6px;top:645.3px;width:89.4px;height:19.8px;background:#f0f0f0;"></div>
<div class="b" style="left:968px;top:645.3px;width:98.8px;height:19.8px;background:#fff;"></div>
<span class="t" style="left:883.7px;top:651px;font-size:11.5px;color:#17101f;transform:scaleX(0.921);">Escalar en Y</span>
<span class="t" style="left:971.5px;top:650px;font-size:11.5px;color:#17101f;transform:scaleX(1.006);">0</span>
<div class="b" style="left:878.6px;top:665.6px;width:89.4px;height:19.8px;background:#f0f0f0;"></div>
<div class="b" style="left:968px;top:665.6px;width:98.8px;height:19.8px;background:#fff;"></div>
<span class="t" style="left:883.7px;top:671px;font-size:11.5px;color:#17101f;transform:scaleX(0.860);">Espejear</span>
<div class="b" style="left:967.4px;top:665.2px;width:99.4px;height:20.4px;border:1px solid #555;background:#fff;"></div>
<span class="t" style="left:971.9px;top:670px;font-size:11.5px;color:#17101f;">No</span>
<div class="b" style="left:878px;top:460px;width:189px;height:1px;background:#858585;"></div>
<div class="b" style="left:878px;top:517px;width:189px;height:1px;background:#858585;"></div>
<div class="b" style="left:878px;top:537px;width:189px;height:1px;background:#858585;"></div>
<div class="b" style="left:878px;top:557px;width:189px;height:1px;background:#858585;"></div>
<div class="b" style="left:878px;top:577px;width:189px;height:1px;background:#858585;"></div>
<div class="b" style="left:878px;top:597px;width:189px;height:1px;background:#858585;"></div>
<div class="b" style="left:878px;top:645px;width:189px;height:1px;background:#858585;"></div>
<div class="b" style="left:878px;top:665px;width:189px;height:1px;background:#858585;"></div>
<div class="b" style="left:878px;top:685px;width:189px;height:1px;background:#858585;"></div>
<div class="b" style="left:860px;top:685.8px;width:216px;height:10.2px;overflow:hidden;"><div style="position:absolute;left:-860px;top:-685.8px;"><div class="b" style="left:878.6px;top:685.8px;width:89.4px;height:19.8px;background:#f0f0f0;"></div>
<div class="b" style="left:968px;top:685.8px;width:98.8px;height:19.8px;background:#fff;"></div>
<span class="t" style="left:883.7px;top:691px;font-size:11.5px;color:#17101f;transform:scaleX(0.875);">Espejear Y</span>
<div class="b" style="left:967.4px;top:685.4px;width:99.4px;height:20.4px;border:1px solid #555;background:#fff;"></div>
<span class="t" style="left:971.9px;top:690px;font-size:11.5px;color:#17101f;">No</span>
</div></div><div class="b" style="left:863.6px;top:726.4px;width:224px;height:18.4px;background:#fdfdfd;border:1px solid #d2d2d2;border-radius:3.5px;"></div>
<span class="t" style="left:894.5px;top:731px;font-size:11.5px;color:#17101f;transform:scaleX(0.917);">Aplicar en todos los Componentes</span>
<svg class="b" style="left:843px;top:170px;" width="266" height="592" viewBox="843 170 266 592"><circle cx="1055.6" cy="430.0" r="8.4" fill="#8fa3bd" opacity=".55"/><circle cx="1055.6" cy="429.4" r="7.9" fill="#fff" stroke="#a9b4c4" stroke-width="1"/><path d="M1052.3999999999999 428.79999999999995l3.2-3l3.2 3M1052.3999999999999 432.79999999999995l3.2-3l3.2 3" fill="none" stroke="#1b2d6b" stroke-width="1.3"/><circle cx="1055.6" cy="486.20000000000005" r="8.4" fill="#8fa3bd" opacity=".55"/><circle cx="1055.6" cy="485.6" r="7.9" fill="#fff" stroke="#a9b4c4" stroke-width="1"/><path d="M1052.3999999999999 485.0l3.2-3l3.2 3M1052.3999999999999 489.0l3.2-3l3.2 3" fill="none" stroke="#1b2d6b" stroke-width="1.3"/><circle cx="1055.6" cy="614.0" r="8.4" fill="#8fa3bd" opacity=".55"/><circle cx="1055.6" cy="613.4" r="7.9" fill="#fff" stroke="#a9b4c4" stroke-width="1"/><path d="M1052.3999999999999 612.8l3.2-3l3.2 3M1052.3999999999999 616.8l3.2-3l3.2 3" fill="none" stroke="#1b2d6b" stroke-width="1.3"/><path d="M1054 673.4l4.8 4.6l4.8-4.6" fill="none" stroke="#444" stroke-width="1"/><clipPath id="cc"><rect x="860" y="685.8" width="216" height="10.2"/></clipPath><path clip-path="url(#cc)" d="M1054 693.4l4.8 4.6l4.8-4.6" fill="none" stroke="#444" stroke-width="1"/><rect x="1095.9" y="175.9" width="3.6" height="5.2" fill="#fff" stroke="#111" stroke-width="1"/><path d="M1098.9 175.6V181.4" stroke="#111" stroke-width="1.6"/><path d="M1093.9 181.6H1101.1M1097.5 181.6V185.2" stroke="#111" stroke-width="1.1"/><rect x="852.3" y="215.4" width="5.4" height="4.2" rx=".8" fill="#dcc09a" stroke="#a78a60" stroke-width=".8"/><path d="M852.6 216.8H857.4" stroke="#f3e6cf" stroke-width=".8"/><rect x="860.5" y="209.5" width="7.2" height="10.1" rx="1" fill="#dcc09a" stroke="#a78a60" stroke-width=".8"/><path d="M861.6 212.2H866.6" stroke="#8f7248" stroke-width="1"/><rect x="862" y="214.6" width="1" height="1.2" fill="#fff"/><path d="M852.4 209.2L857 213" stroke="#444" stroke-width="1.2"/><path d="M857.8 213.8L854.2 213.4L857.2 210.4Z" fill="#444"/><rect x="852.5" y="235.5" width="3.2" height="11" fill="#8fd2ff" stroke="#1a7fd8" stroke-width=".9"/><path d="M857.4 238.6Q858.6 240.6 856.6 242" fill="none" stroke="#999" stroke-width=".8" stroke-dasharray="1 .8"/><g transform="translate(858.4 232.6) rotate(32)"><rect x="0" y="0" width="11.6" height="3.6" fill="#ee5a5a" stroke="#c42222" stroke-width=".9"/></g><defs><linearGradient id="mg" x1="0" y1="0" x2="0" y2="1"><stop offset="0" stop-color="#fbb89a"/><stop offset="1" stop-color="#e2402c"/></linearGradient></defs><path d="M853.6 268.2V258.6Q853.6 257.8 854.6 257.8H856.4L860 262.6L863.6 257.8H865.6Q866.6 257.8 866.6 258.6V268.2H863V263.4L860 267L857 263.4V268.2Z" fill="url(#mg)" stroke="#c83a2a" stroke-width="1" stroke-linejoin="round"/><rect x="857.4" y="284.3" width="5.2" height="5.2" rx="1" fill="#dcc09a" stroke="#a78a60" stroke-width=".8"/><path d="M860 278.6L863 282H861V283.4H859V282H857Z M860 295L863 291.6H861V290.2H859V291.6H857Z M851.8 286.9L855.2 283.9V285.9H856.6V287.9H855.2V289.9Z M868.2 286.9L864.8 283.9V285.9H863.4V287.9H864.8V289.9Z" fill="#18397a"/><rect x="853.6" y="307.4" width="11.2" height="9.6" rx="1" fill="#fff" stroke="#1b6fe0" stroke-width="1.5"/><path d="M855.6 311.0H862.8000000000001M855.6 313.0H862.8000000000001M855.6 314.79999999999995H860.6" stroke="#8fc0f5" stroke-width=".9"/><path d="M855.8000000000001 308.2Q857.6 303.79999999999995 862.6 304.0H866.2V309.2H863.6Q860.6 310.4 858.6 309.0Z" fill="#f0b55e" stroke="#c98b2e" stroke-width=".6"/><rect x="865.8000000000001" y="303.79999999999995" width="2.6" height="5.6" fill="#2a3f8a"/><rect x="855.4" y="366.6" width="11.2" height="9.6" rx="1" fill="#fff" stroke="#1b6fe0" stroke-width="1.5"/><path d="M857.4 370.6H859.6M857.4 373.0H859.6M860.8 371.8H864.6M862.6999999999999 369.8V373.8" stroke="#3a86e8" stroke-width=".9"/><path d="M857.6 367.40000000000003Q859.4 363.0 864.4 363.20000000000005H868.0V368.40000000000003H865.4Q862.4 369.6 860.4 368.20000000000005Z" fill="#f0b55e" stroke="#c98b2e" stroke-width=".6"/><rect x="867.6" y="363.0" width="2.6" height="5.6" fill="#2a3f8a"/><rect x="852.2" y="327.2" width="4.4" height="6.2" rx=".8" fill="#e9dcc8" stroke="#c9b594" stroke-width=".5"/><rect x="853.6" y="328.2" width="1.4" height="3" fill="#f7f0e4" opacity=".8"/><rect x="857.2" y="327.2" width="4.4" height="6.2" rx=".8" fill="#e9dcc8" stroke="#c9b594" stroke-width=".5"/><rect x="858.6" y="328.2" width="1.4" height="3" fill="#f7f0e4" opacity=".8"/><rect x="862.2" y="327.2" width="4.4" height="6.2" rx=".8" fill="#e9dcc8" stroke="#c9b594" stroke-width=".5"/><rect x="863.6" y="328.2" width="1.4" height="3" fill="#f7f0e4" opacity=".8"/><rect x="852.2" y="335.4" width="4.4" height="6.2" rx=".8" fill="#b8976a" stroke="#c9b594" stroke-width=".5"/><rect x="853.6" y="336.4" width="1.4" height="3" fill="#f7f0e4" opacity=".8"/><rect x="857.2" y="335.4" width="4.4" height="6.2" rx=".8" fill="#d8c2a0" stroke="#c9b594" stroke-width=".5"/><rect x="858.6" y="336.4" width="1.4" height="3" fill="#f7f0e4" opacity=".8"/><rect x="862.2" y="335.4" width="4.4" height="6.2" rx=".8" fill="#d8c2a0" stroke="#c9b594" stroke-width=".5"/><rect x="863.6" y="336.4" width="1.4" height="3" fill="#f7f0e4" opacity=".8"/><rect x="941.2" y="363.6" width="13.6" height="3.4" fill="#2f77c9"/><path d="M943 365.3H950" stroke="#7fb2ea" stroke-width=".8"/><rect x="951.4" y="364.6" width="1.6" height="1.4" fill="#cfe3fa"/><rect x="941.2" y="368.6" width="13.6" height="3.4" fill="#2f77c9"/><path d="M943 370.3H950" stroke="#7fb2ea" stroke-width=".8"/><rect x="951.4" y="369.6" width="1.6" height="1.4" fill="#cfe3fa"/><rect x="941.2" y="373.6" width="13.6" height="3.4" fill="#2f77c9"/><path d="M943 375.3H950" stroke="#7fb2ea" stroke-width=".8"/><rect x="951.4" y="374.6" width="1.6" height="1.4" fill="#cfe3fa"/><rect x="964.4" y="363.9" width="13.2" height="12" fill="#fff" stroke="#2e5f9e" stroke-width="1"/><rect x="964.9" y="364.4" width="12.2" height="2.8" fill="#3a82d6"/><rect x="974" y="365" width="1.8" height="1.4" fill="#cfe3fa"/><path d="M965 370H977M965 372.8H977M971 367.4V375.6" stroke="#9ab0cc" stroke-width=".8"/></svg>
<div class="b" style="left:31px;top:738px;width:807px;height:23.4px;background:linear-gradient(#fafafa,#f1f1f1);"></div>
<div class="b" style="left:30px;top:761px;width:809px;height:1px;background:#9a9a9a;"></div>
<div class="b" style="left:7px;top:762px;width:1101px;height:22px;background:linear-gradient(90deg,#efefef,#f3f3f3 50%,#fbfbfb);border-radius:0 0 7px 7px;"></div>
<div class="b" style="left:271.5px;top:739px;width:486px;height:21.6px;background:linear-gradient(90deg,#fff 0,#fff 80%,#f4f4f4 100%);border-left:1px solid #e2e2e2;"></div>
<span class="t" style="left:53.8px;top:744px;font-size:12px;color:#1a101c;transform:scaleX(1.015);">Connect</span>
<span class="t" style="left:130.0px;top:744px;font-size:12px;color:#1a101c;transform:scaleX(0.964);">Conexión P</span>
<div class="b" style="left:200px;top:739.2px;width:64px;height:20.8px;border:1px solid #1f78d8;background:#f2f7fd;"></div>
<span class="t" style="left:220.9px;top:744px;font-size:12px;color:#1a101c;transform:scaleX(1.009);">Project</span>
<span class="t" style="left:272.8px;top:745px;font-size:12px;color:#1a101c;transform:scaleX(0.995);">Selecione um item para aplicar o material copiado</span>
<div class="b" style="left:760.4px;top:739px;width:47.6px;height:20.6px;border:1px solid #1f78d8;background:#f4f8fd;"></div>
<span class="t" style="left:781.1px;top:744px;font-size:12px;color:#1a101c;transform:scaleX(0.878);">Sala</span>
<span class="t" style="left:10.9px;top:769px;font-size:12px;color:#1a101c;transform:scaleX(0.993);">Selecione um item para aplicar o material copiado</span>
<span class="t" style="left:723.4px;top:767px;font-size:12px;color:#1a101c;transform:scaleX(1.008);">Mostrar</span>
<div class="b" style="left:784.2px;top:763.2px;width:69.6px;height:19.2px;border:1px solid #1f78d8;background:#f3f7fc;"></div>
<span class="t" style="left:805.2px;top:767px;font-size:12px;color:#1a101c;">Colisión</span>
<div class="b" style="left:859.2px;top:763.2px;width:106.6px;height:19.2px;border:1px solid #1f78d8;background:#f3f7fc;"></div>
<span class="t" style="left:879.9px;top:767px;font-size:12px;color:#1a101c;transform:scaleX(1.025);">Acoplamientos</span>
<span class="t" style="left:992.0px;top:767px;font-size:12px;color:#1a101c;transform:scaleX(0.976);">Auto Rebajar</span>
<svg class="b" style="left:0px;top:735px;" width="1116" height="52" viewBox="0 735 1116 52"><circle cx="37.9" cy="754" r="1.9" fill="#1f7ad0"/><path d="M36.4 748.6A6.6 6.6 0 0 1 43.2 755.4" fill="none" stroke="#1f7ad0" stroke-width="2.4"/><path d="M36.4 744.2A11 11 0 0 1 47.8 755.4" fill="none" stroke="#1f7ad0" stroke-width="2.6"/><circle cx="119.1" cy="749.1" r="6.7" fill="#8ecbf4"/><g stroke="#e8f5fd" stroke-width=".8" fill="none"><ellipse cx="119.1" cy="749.1" rx="3" ry="6.7"/><path d="M119.1 742.4V755.8M112.4 749.1H125.8M113.4 745.6H124.8M113.4 752.6H124.8"/></g><circle cx="119.1" cy="749.1" r="6.7" fill="none" stroke="#6fb5e8" stroke-width=".6"/><path d="M203.6 754.6V744.4Q203.6 743.4 204.6 743.4H208.6L210 745H214.6Q215.6 745 215.6 746V747.4" fill="#f6e3a8" stroke="#d2a53c" stroke-width=".9"/><path d="M203.6 754.8L206 747.6H217L214.8 754.8Z" fill="#fbeec2" stroke="#d2a53c" stroke-width=".9" stroke-linejoin="round"/><path d="M207 744.6L211 742.4L214 744.4" fill="none" stroke="#bbb" stroke-width=".7"/><rect x="750.2" y="755.8" width="2" height="2" fill="#a6a6a6"/><rect x="746.8000000000001" y="755.8" width="2" height="2" fill="#a6a6a6"/><rect x="743.4000000000001" y="755.8" width="2" height="2" fill="#a6a6a6"/><rect x="750.2" y="752.4" width="2" height="2" fill="#a6a6a6"/><rect x="746.8000000000001" y="752.4" width="2" height="2" fill="#a6a6a6"/><rect x="750.2" y="749.0" width="2" height="2" fill="#a6a6a6"/><path d="M765 742.4H773L777 746.4V756H765Z" fill="#fff" stroke="#8aa4c8" stroke-width=".9"/><path d="M773 742.4V746.4H777" fill="#e4ecf7" stroke="#8aa4c8" stroke-width=".8"/><path d="M766.6 751.4L771 748L776 750.6V754.6L771 756.4L766.6 754.4Z" fill="#c9cdd4" stroke="#777" stroke-width=".7"/><circle cx="769.6" cy="752.4" r="1.2" fill="#3d6fc0"/><circle cx="773.6" cy="752" r="1.1" fill="#e0a030"/><path d="M821 746.4L828 753M828 746.4L821 753" stroke="#9a9a9a" stroke-width="1.7"/><g fill="none" stroke="#222" stroke-width="1.3"><circle cx="708.6" cy="775" r="2.6"/><circle cx="716.4" cy="775" r="2.6"/><path d="M711.2 774.6Q712.5 773.4 713.8 774.6M706.4 773.4L705 769.6M718.6 773.4L717.4 770"/></g><path d="M770 771.8H775.4L772.7 774.6Z" fill="#222"/><rect x="786.8" y="766.2" width="2.6" height="13.6" fill="#fff" stroke="#8a8a8a" stroke-width=".8"/><path d="M790.6 768.4H796.4V770H800.8V771.6H796.4V773.4H800.8V775H796.4V776.8H800.8V778.4H796.4V780H790.6Z" fill="#8a624a" stroke="#5e3f2e" stroke-width=".6"/><rect x="861.4" y="765.8" width="6.6" height="4.4" fill="#a88262" stroke="#6e4e38" stroke-width=".6"/><rect x="864.0" y="767.4" width="1.4" height="1" fill="#4a3222"/><rect x="861.4" y="770.8" width="6.6" height="4.4" fill="#a88262" stroke="#6e4e38" stroke-width=".6"/><rect x="864.0" y="772.4" width="1.4" height="1" fill="#4a3222"/><rect x="861.4" y="775.8" width="6.6" height="4.4" fill="#a88262" stroke="#6e4e38" stroke-width=".6"/><rect x="864.0" y="777.4" width="1.4" height="1" fill="#4a3222"/><rect x="870" y="765.8" width="6.6" height="4.4" fill="#a88262" stroke="#6e4e38" stroke-width=".6"/><rect x="872.6" y="767.4" width="1.4" height="1" fill="#4a3222"/><rect x="870" y="770.8" width="6.6" height="4.4" fill="#a88262" stroke="#6e4e38" stroke-width=".6"/><rect x="872.6" y="772.4" width="1.4" height="1" fill="#4a3222"/><rect x="870" y="775.8" width="6.6" height="4.4" fill="#a88262" stroke="#6e4e38" stroke-width=".6"/><rect x="872.6" y="777.4" width="1.4" height="1" fill="#4a3222"/><path d="M869 770V776.6M865.8 773.3H872.4" stroke="#fff" stroke-width="3.2"/><path d="M869 770.6V776M866.4 773.3H871.8" stroke="#e8141c" stroke-width="1.8"/><path d="M981 766V771.4" stroke="#e03030" stroke-width="1.6"/><path d="M978.6 770.4L981 773.8L983.4 770.4Z" fill="#e03030"/><rect x="975" y="776.2" width="12" height="3.6" fill="#e8c98a" stroke="#b08a3a" stroke-width=".8"/><path d="M975 775.2H979.6M982.4 775.2H987" stroke="#b08a3a" stroke-width=".9"/><g transform="translate(1074.6 768.4) rotate(38)"><rect x="0" y="-1.6" width="11" height="3.4" rx="1.2" fill="#c9c9c9" stroke="#8a8a8a" stroke-width=".7"/><rect x="10" y="-2.2" width="9.4" height="4.6" rx="1.6" fill="#f0b020" stroke="#b07a10" stroke-width=".7"/><circle cx="0" cy="0" r="2.8" fill="#d8d8d8" stroke="#8a8a8a" stroke-width=".7"/><circle cx="-1.2" cy="0" r="1.2" fill="#f0f0f0"/></g><rect x="1103" y="779.6" width="1.8" height="1.8" fill="#a9a9a9"/><rect x="1099.8" y="779.6" width="1.8" height="1.8" fill="#a9a9a9"/><rect x="1096.6" y="779.6" width="1.8" height="1.8" fill="#a9a9a9"/><rect x="1103" y="776.4" width="1.8" height="1.8" fill="#a9a9a9"/><rect x="1099.8" y="776.4" width="1.8" height="1.8" fill="#a9a9a9"/><rect x="1103" y="773.2" width="1.8" height="1.8" fill="#a9a9a9"/></svg>
</body></html>
